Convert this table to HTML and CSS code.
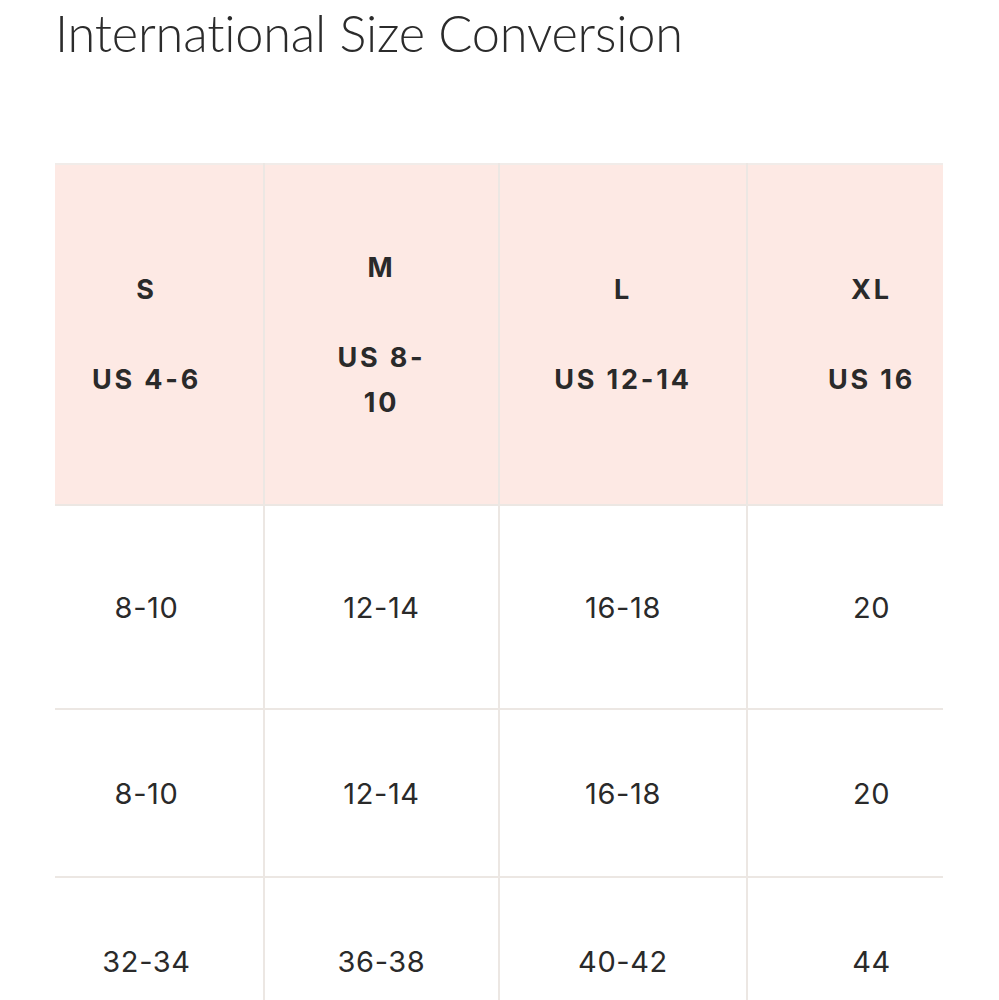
FILE: index.html
```html
<!DOCTYPE html>
<html>
<head>
<meta charset="utf-8">
<link rel="stylesheet" href="styles.css">
</head>
<body>
<div class="page">
  <h1 class="title">International Size Conversion</h1>
  <table class="sizes">
    <colgroup>
      <col class="c1"><col class="c2"><col class="c3"><col class="c4">
    </colgroup>
    <thead>
      <tr class="head">
        <th class="p1">S<br><br>US 4-6</th>
        <th>M<br><br>US 8-<br>10</th>
        <th>L<br><br>US 12-14</th>
        <th class="p4">XL<br><br>US 16</th>
      </tr>
    </thead>
    <tbody>
      <tr class="r1">
        <td class="p1">8-10</td><td>12-14</td><td>16-18</td><td class="p4">20</td>
      </tr>
      <tr class="r2">
        <td class="p1">8-10</td><td>12-14</td><td>16-18</td><td class="p4">20</td>
      </tr>
      <tr class="r3">
        <td class="p1">32-34</td><td>36-38</td><td>40-42</td><td class="p4">44</td>
      </tr>
    </tbody>
  </table>
</div>
</body>
</html>
```

FILE: styles.css
```css
html, body {
  margin: 0;
  padding: 0;
  background: #ffffff;
}
.page {
  padding: 0 0 0 55px;
  width: 888px;
}
.title {
  margin: 0;
  padding-top: 3px;
  font-family: "Lato", sans-serif;
  font-weight: 300;
  font-size: 50.5px;
  line-height: 60px;
  color: #2b2b2b;
  letter-spacing: -0.2px;
  height: 163px;
  padding-left: 0;
  box-sizing: border-box;
}
.sizes {
  border-collapse: collapse;
  width: 888px;
  table-layout: fixed;
  font-family: "Inter", sans-serif;
  color: #2a2a2a;
}
.c1 { width: 209px; }
.c2 { width: 235px; }
.c3 { width: 248px; }
.c4 { width: 196px; }
.sizes th, .sizes td {
  border: 2px solid #ece7e3;
  text-align: center;
  vertical-align: middle;
  padding: 0;
}
.sizes tr > :first-child { border-left: none; }
.sizes tr > :last-child { border-right: none; }
.sizes thead th { border-top: 2px solid #f1ece9; }
.head th {
  background: #fde9e4;
  height: 339px;
  font-weight: 700;
  font-size: 27px;
  line-height: 45px;
  letter-spacing: 2.8px;
}
.sizes td {
  font-size: 29px;
  font-weight: 400;
  letter-spacing: 0.6px;
}
.r1 td { height: 202px; }
.r2 td { height: 166px; }
.r3 td { height: 166px; }
.p1 { padding-right: 25px !important; }
.p4 { padding-left: 52px !important; }
```
